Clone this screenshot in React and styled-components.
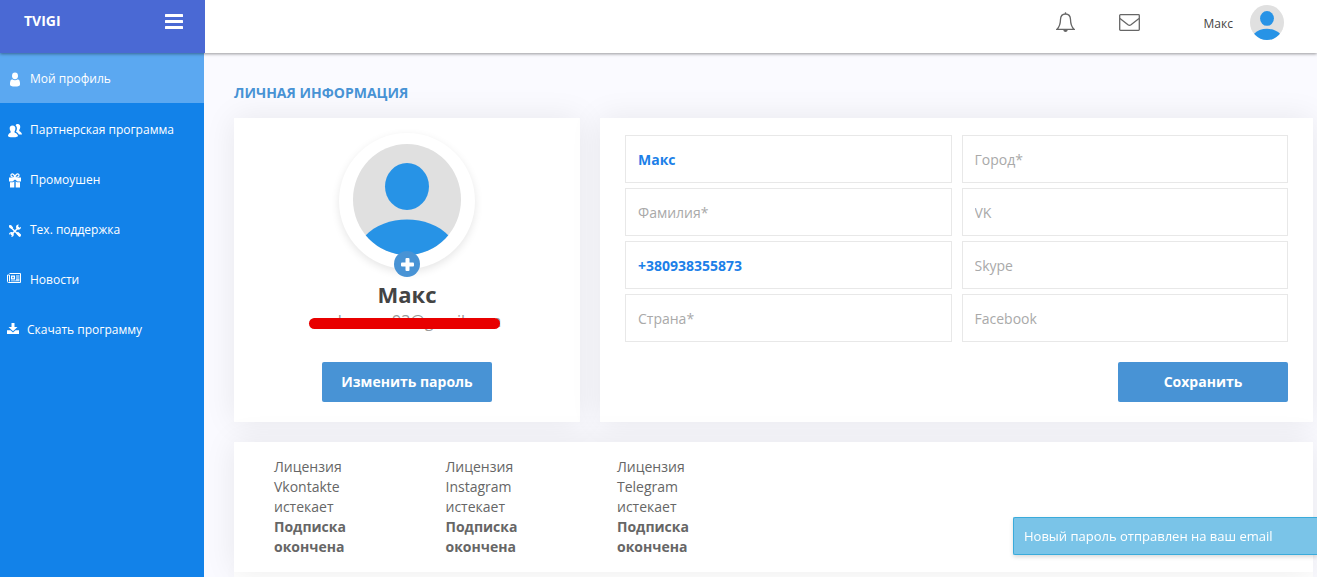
import React, { useState } from "react";
import styled, { createGlobalStyle } from "styled-components";

const GlobalStyle = createGlobalStyle`
  * {
    box-sizing: border-box;
  }

  body {
    margin: 0;
    background: #fafaff;
    color: #666;
    font-family: "Open Sans", sans-serif;
    font-size: 14px;
    line-height: 20px;
  }
`;

const Page = styled.div`
  display: flex;
  flex-direction: column;
  min-height: 100vh;
`;

const Header = styled.header`
  position: relative;
  z-index: 2;
  display: flex;
  height: 53px;
  background: #fff;
  box-shadow: 0 1px 3px rgba(0, 0, 0, 0.4);
`;

const Brand = styled.div`
  display: flex;
  justify-content: space-between;
  align-items: center;
  width: 205px;
  padding: 0 22px 11px 24px;
  background: #4a69d4;
`;

const Logo = styled.a`
  color: #fff;
  font-size: 14px;
  font-weight: 700;
  text-decoration: none;
`;

const IconButton = styled.button`
  display: flex;
  padding: 0;
  border: 0;
  background: none;
  color: ${({ $color }) => $color || "#666"};
  cursor: pointer;
`;

const HeaderTools = styled.div`
  display: flex;
  flex: 1;
  justify-content: flex-end;
  align-items: center;
  gap: 44px;
  padding: 0 33px 8px 0;
`;

const UserMenu = styled.div`
  display: flex;
  align-items: center;
  gap: 17px;
  margin-left: 20px;
  color: #444;
  font-size: 12px;
`;

const UserName = styled.span`
  padding-top: 2px;
`;

const Body = styled.div`
  display: flex;
  flex: 1;
`;

const Sidebar = styled.nav`
  flex: 0 0 204px;
  background: #1282e9;
`;

const NavLink = styled.a`
  display: flex;
  align-items: center;
  gap: 8px;
  height: 50px;
  padding: 2px 7px 0;
  margin-bottom: ${({ $active }) => ($active ? "1px" : "0")};
  background: ${({ $active }) => ($active ? "#5ba8f1" : "transparent")};
  color: #fff;
  font-size: 12px;
  text-decoration: none;
`;

const Main = styled.main`
  display: flex;
  flex: 1;
  flex-direction: column;
  min-width: 0;
  padding: 30px 4px 0 30px;
`;

const Title = styled.h1`
  margin: 0 0 15px;
  color: #4893d5;
  font-size: 14px;
  font-weight: 700;
  line-height: 20px;
  text-transform: uppercase;
`;

const Columns = styled.div`
  display: grid;
  grid-template-columns: 33fr 68fr;
  gap: 20px;
  margin-bottom: 20px;

  /* Mobile view */
  @media (max-width: 768px) {
    grid-template-columns: 1fr;
  }
`;

const Card = styled.section`
  background: #fff;
  box-shadow: 0 0 30px rgba(0, 0, 0, 0.08);
`;

const ProfileCard = styled(Card)`
  display: flex;
  flex-direction: column;
  align-items: center;
  padding: 15px 20px 20px;
`;

const AvatarRing = styled.div`
  position: relative;
  display: flex;
  justify-content: center;
  width: 136px;
  height: 136px;
  padding-top: 11px;
  border-radius: 50%;
  box-shadow: 0 3px 8px rgba(0, 0, 0, 0.1);
`;

const AddPhoto = styled.button`
  position: absolute;
  bottom: -8px;
  left: 55px;
  display: flex;
  justify-content: center;
  align-items: center;
  width: 26px;
  height: 26px;
  padding: 0;
  border: 0;
  border-radius: 50%;
  background: #4893d5;
  color: #fff;
  cursor: pointer;
`;

const Name = styled.h2`
  margin: 10px 0 0;
  color: #444;
  font-size: 22px;
  font-weight: 700;
  line-height: 30px;
`;

const Email = styled.div`
  position: relative;
  margin-bottom: auto;
  color: #999;
  font-size: 16px;
  line-height: 24px;
`;

const Strike = styled.span`
  position: absolute;
  top: 9px;
  left: 50%;
  width: 191px;
  height: 11px;
  margin-left: -98px;
  border-radius: 6px;
  background: #e80000;
`;

const Button = styled.button`
  width: 170px;
  height: 40px;
  padding: 0 0 2px;
  border: 0;
  border-radius: 2px;
  background: #4893d5;
  color: #fff;
  font-family: inherit;
  font-size: 14px;
  font-weight: 700;
  cursor: pointer;
`;

const FormCard = styled(Card)`
  padding: 17px 25px 20px;
`;

const Form = styled.form`
  display: flex;
  flex-direction: column;
  align-items: flex-end;
  gap: 20px;
`;

const Fields = styled.div`
  display: grid;
  grid-template-columns: 1fr 1fr;
  gap: 5px 10px;
  width: 100%;
`;

const Input = styled.input`
  width: 100%;
  height: 48px;
  padding: 0 12px;
  border: 1px solid #e8e8e8;
  border-radius: 0;
  background: #fff;
  color: #1c7fe8;
  font-family: inherit;
  font-size: 14px;
  font-weight: 700;

  &::placeholder {
    color: #a9a9a9;
    font-weight: 400;
    opacity: 1;
  }
`;

const LicenseCard = styled(Card)`
  position: relative;
  display: grid;
  grid-template-columns: repeat(6, 1fr);
  padding: 0 25px;
`;

const License = styled.div`
  padding: 15px 50px 15px 15px;
`;

const NextCard = styled(Card)`
  flex: 1;
`;

const Toast = styled.div`
  position: fixed;
  z-index: 3;
  right: 0;
  bottom: 22px;
  width: 304px;
  padding: 8px 10px;
  border: 1px solid #3aabdb;
  border-right: 0;
  border-radius: 2px 0 0 2px;
  background: #7ac4e8;
  box-shadow: 0 2px 4px rgba(0, 0, 0, 0.15);
  color: #fff;
  font-size: 13px;
`;

const Avatar = ({ width, height }) => (
  <svg width={width} height={height} viewBox="0 0 108 111" preserveAspectRatio="none">
    <defs>
      <clipPath id={`avatar-${width}`}>
        <ellipse cx="54" cy="55.5" rx="54" ry="55.5" />
      </clipPath>
    </defs>
    <g clipPath={`url(#avatar-${width})`}>
      <rect width="108" height="111" fill="#e0e0e0" />
      <ellipse cx="54" cy="42.5" rx="22" ry="23.5" fill="#2793e6" />
      <path d="M12 92C22 81 38 75.500 54 75.500S86 81 96 92V111H12Z" fill="#2793e6" />
    </g>
  </svg>
);

const MenuIcon = () => (
  <svg width="18" height="15" viewBox="0 0 18 15" fill="currentColor">
    <rect width="18" height="3" rx="0.5" />
    <rect y="6" width="18" height="3" rx="0.5" />
    <rect y="12" width="18" height="3" rx="0.5" />
  </svg>
);

const BellIcon = () => (
  <svg width="19" height="21" viewBox="0 0 19 21" fill="none" stroke="currentColor" strokeWidth="1.300">
    <path d="M9.500 2C6.300 2 4.600 4.300 4.500 7.500C4.400 12.500 3.400 15 1 17.300H18C15.600 15 14.600 12.500 14.500 7.500C14.400 4.300 12.700 2 9.500 2Z" />
    <path d="M9.500 0.300V2" />
    <path d="M7.300 18H11.700C11.500 20.600 7.500 20.600 7.300 18Z" fill="currentColor" stroke="none" />
  </svg>
);

const MailIcon = () => (
  <svg width="21" height="17" viewBox="0 0 21 17" fill="none" stroke="currentColor" strokeWidth="1.300">
    <rect x="0.700" y="0.700" width="19.600" height="15.600" rx="0.800" />
    <path d="M1 4.500L9 10.800Q10.500 11.900 12 10.800L20 4.500" />
  </svg>
);

const PlusIcon = () => (
  <svg width="13" height="13" viewBox="0 0 13 13" fill="currentColor">
    <rect x="4.500" width="4" height="13" rx="1" />
    <rect y="4.500" width="13" height="4" rx="1" />
  </svg>
);

const NavIcon = ({ width = 15, children }) => (
  <svg width={width} height="15" viewBox={`0 0 ${width} 15`} fill="currentColor">
    {children}
  </svg>
);

const icons = {
  user: (
    <>
      <ellipse cx="8" cy="3.800" rx="3" ry="3.400" />
      <path d="M5 7.200Q8 9.400 11 7.200Q13 8 13 11V12.500Q13 14.500 8 14.500T3 12.500V11Q3 8 5 7.200Z" />
    </>
  ),
  users: (
    <>
      <path d="M5.500 2.500C7.600 2.500 8.700 4 8.400 6C8.200 7.500 7.500 8.200 7.400 9C7.400 10 10.800 10.300 11 13C11 14 8 14.300 5.500 14.300S1 14 1 13C1.200 10.300 3.800 10 3.800 9C3.700 8.200 3 7.500 2.700 6C2.400 4 3.500 2.500 5.500 2.500Z" />
      <path d="M8.500 2.200C9 1.300 9.800 1 10.600 1C12.600 1 13.500 2.500 13.200 4.400C13 6 12.200 6.600 12.200 7.400C12.200 8.500 15 9 15 11.500H11.800C11.200 10 10 9.300 9 8.800C9.500 7.600 10 6.200 9.900 4.900C9.800 3.800 9.300 2.800 8.500 2.200Z" />
    </>
  ),
  gift: (
    <>
      <path d="M7.900 4.500C5.500 4.500 3.500 3.500 4 1.800C4.600 0 7.300 1 7.900 4C8.500 1 11.400 0 12 1.800C12.500 3.500 10.300 4.500 7.900 4.500Z" fill="none" stroke="currentColor" strokeWidth="1.200" />
      <path d="M2 4.500H14V8.500H10.500L8 6.500L5.500 8.500H2ZM3 9.300H6L7.300 8.200V14.500H3ZM8.700 8.200L10 9.300H13V14.500H8.700Z" />
    </>
  ),
  tools: (
    <>
      <path d="M3.500 4L12.500 12.800M12 4L4 12" fill="none" stroke="currentColor" strokeWidth="1.500" />
      <path d="M2 2.200L4 2L6.200 4.500L4.500 6L2 4.300ZM9.600 9.800L11 8.800L14 11.500Q14.500 13.500 12.400 14L9.500 11Z" />
      <path d="M11.800 1.600Q9 1.600 9 4.200L9.700 6L11 6.700Q14 6.800 14 3.800L12.200 5L10.900 3.700ZM4.200 13.900Q6.800 13.900 6.800 11.300L6.200 9.800L4.800 9Q2 8.900 2 11.800L3.800 10.600L5.200 12Z" />
    </>
  ),
  news: (
    <g transform="translate(0 -1)">
      <path d="M2.500 1.500H13.500V10.500H1.500Q0.500 10.500 0.500 9.500V3H2.500V9.500" fill="none" stroke="currentColor" />
      <path d="M4 3.500H8V7.500H4ZM9 3.500H12.500V4.500H9ZM9 5.500H12.500V6.500H9ZM9 7.300H12.500V8.300H9ZM4 8.500H12.500V9.300H4Z" />
      <path d="M5.300 4.800H6.700V6.200H5.300Z" fill="#1282e9" />
    </g>
  ),
  download: (
    <path d="M4.500 0H7.500V4H10.500L6 8.300L1.500 4H4.500ZM0 7.300H3.500L6 9.500L8.500 7.300H12V11H0Z" />
  ),
};

const menu = [
  { label: "Мой профиль", icon: "user", active: true },
  { label: "Партнерская программа", icon: "users" },
  { label: "Промоушен", icon: "gift" },
  { label: "Тех. поддержка", icon: "tools" },
  { label: "Новости", icon: "news" },
  { label: "Скачать программу", icon: "download", width: 12 },
];

const fields = [
  { name: "name", placeholder: "Имя*" },
  { name: "city", placeholder: "Город*" },
  { name: "surname", placeholder: "Фамилия*" },
  { name: "vk", placeholder: "VK" },
  { name: "phone", placeholder: "Телефон*" },
  { name: "skype", placeholder: "Skype" },
  { name: "country", placeholder: "Страна*" },
  { name: "facebook", placeholder: "Facebook" },
];

const licenses = ["Vkontakte", "Instagram", "Telegram"];

const App = () => {
  const [values, setValues] = useState({ name: "Макс", phone: "+380938355873" });

  const handleChange = (e) => {
    setValues({ ...values, [e.target.name]: e.target.value });
  };

  return (
    <Page>
      <GlobalStyle />
      <Header>
        <Brand>
          <Logo href="#">TVIGI</Logo>
          <IconButton $color="#fff" aria-label="Меню">
            <MenuIcon />
          </IconButton>
        </Brand>
        <HeaderTools>
          <IconButton aria-label="Уведомления">
            <BellIcon />
          </IconButton>
          <IconButton aria-label="Сообщения">
            <MailIcon />
          </IconButton>
          <UserMenu>
            <UserName>Макс</UserName>
            <Avatar width={34} height={35} />
          </UserMenu>
        </HeaderTools>
      </Header>

      <Body>
        <Sidebar>
          {menu.map((item) => (
            <NavLink key={item.label} href="#" $active={item.active}>
              <NavIcon width={item.width}>{icons[item.icon]}</NavIcon>
              {item.label}
            </NavLink>
          ))}
        </Sidebar>

        <Main>
          <Title>Личная информация</Title>
          <Columns>
            <ProfileCard>
              <AvatarRing>
                <Avatar width={108} height={111} />
                <AddPhoto aria-label="Добавить фото">
                  <PlusIcon />
                </AddPhoto>
              </AvatarRing>
              <Name>Макс</Name>
              <Email>
                xxxlxxxxxx93@gmail.com
                <Strike />
              </Email>
              <Button type="button">Изменить пароль</Button>
            </ProfileCard>

            <FormCard>
              <Form onSubmit={(e) => e.preventDefault()}>
                <Fields>
                  {fields.map((field) => (
                    <Input
                      key={field.name}
                      name={field.name}
                      aria-label={field.placeholder}
                      placeholder={field.placeholder}
                      value={values[field.name] || ""}
                      onChange={handleChange}
                    />
                  ))}
                </Fields>
                <Button type="submit">Сохранить</Button>
              </Form>
            </FormCard>
          </Columns>

          <LicenseCard>
            {licenses.map((license) => (
              <License key={license}>
                Лицензия {license} истекает <b>Подписка окончена</b>
              </License>
            ))}
          </LicenseCard>
          <NextCard />
        </Main>
      </Body>

      <Toast role="status">Новый пароль отправлен на ваш email</Toast>
    </Page>
  );
};

export default App;
